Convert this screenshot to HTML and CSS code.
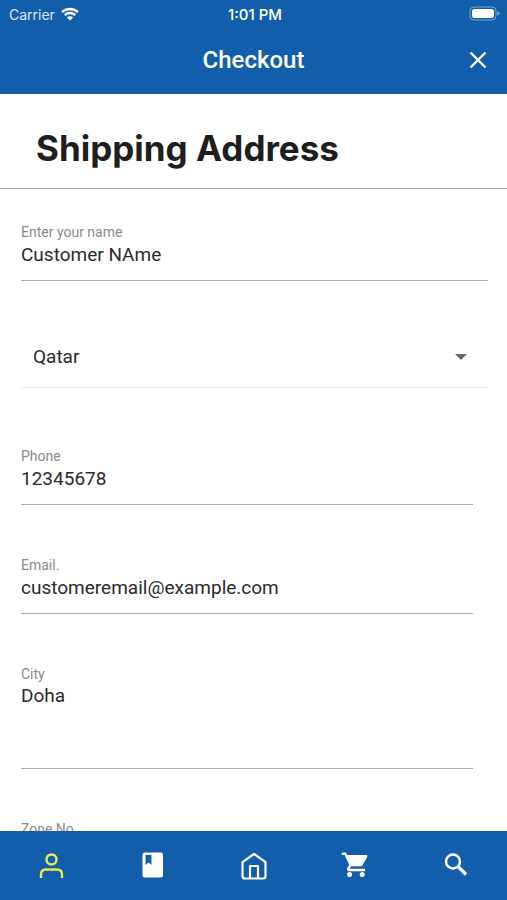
FILE: index.html
```html
<!DOCTYPE html>
<html lang="en">
<head>
<meta charset="utf-8">
<meta name="viewport" content="width=device-width, initial-scale=1">
<title>Checkout</title>
<link rel="stylesheet" href="styles.css">
</head>
<body>
<header class="top">
  <div class="status">
    <div class="carrier">Carrier
      <svg class="wifi" viewBox="0 0 18 14" aria-hidden="true"><path d="M1 5.2C5.500.9 12.500.9 17 5.200M3.700 8.100C6.700 5.300 11.300 5.300 14.300 8.100" fill="none" stroke="currentColor" stroke-width="2.300"/><path d="M9 13.500L5.900 10.400C7.600 8.900 10.400 8.900 12.100 10.400Z" fill="currentColor"/></svg>
    </div>
    <div class="time">1:01 PM</div>
    <div class="power">
      <svg class="battery" viewBox="0 0 32 16" aria-hidden="true"><rect x="1" y="1" width="26" height="13" rx="4" fill="none" stroke="#fff" stroke-opacity=".45"/><rect x="3" y="3" width="22" height="9" rx="2.500" fill="#fff"/><path d="M28.500 5.500V9.500Q30.500 8.800 30.500 7.500T28.500 5.500Z" fill="#fff" fill-opacity=".5"/></svg>
    </div>
  </div>
  <div class="appbar">
    <h1 class="title">Checkout</h1>
    <button class="close" type="button" aria-label="Close"><svg viewBox="0 0 18 18" aria-hidden="true"><path d="M1.500 1.500L16.500 16.500M16.500 1.500L1.500 16.500" stroke="currentColor" stroke-width="2.400" fill="none"/></svg></button>
  </div>
</header>
<main class="content">
  <h2 class="heading">Shipping Address</h2>
  <form class="form">
    <div class="field">
      <label for="name">Enter your name</label>
      <input id="name" type="text" value="Customer NAme">
    </div>
    <div class="country">
      <select aria-label="Country"><option>Qatar</option></select>
      <svg class="caret" viewBox="0 0 12 6" aria-hidden="true"><path d="M0 0H12L6 6Z" fill="currentColor"/></svg>
    </div>
    <div class="group">
      <div class="field">
        <label for="phone">Phone</label>
        <input id="phone" type="tel" value="12345678">
      </div>
      <div class="field">
        <label for="email">Email.</label>
        <input id="email" type="email" value="customeremail@example.com">
      </div>
      <div class="field">
        <label for="city">City</label>
        <textarea id="city" rows="3">Doha</textarea>
      </div>
      <div class="field">
        <label for="zone">Zone No</label>
        <input id="zone" type="text">
      </div>
    </div>
  </form>
</main>
<nav class="tabs">
  <a class="tab active" href="#account" aria-label="Account"><svg viewBox="0 0 28 28" aria-hidden="true"><g fill="none" stroke="currentColor" stroke-width="2.400"><circle cx="14.500" cy="7.500" r="5"/><path d="M4 26V22.500Q4 17.500 9 17.500H20Q25 17.500 25 22.500V26"/></g></svg></a>
  <a class="tab" href="#catalog" aria-label="Catalog"><svg viewBox="0 0 28 28" aria-hidden="true"><path fill="currentColor" fill-rule="evenodd" d="M7 .5H22.500Q25 .5 25 3V23Q25 25.500 22.500 25.500H7Q4.500 25.500 4.500 23V3Q4.500 .5 7 .5ZM7.500 3V13L10.500 10.500L13.500 13V3Z"/></svg></a>
  <a class="tab" href="#home" aria-label="Home"><svg viewBox="0 0 28 28" aria-hidden="true"><g fill="none" stroke="currentColor" stroke-width="2.200" stroke-linejoin="round"><path d="M14 2L25.500 10.200V24Q25.500 26.500 23 26.500H5Q2.500 26.500 2.500 24V10.200Z"/><path d="M10 26.500V14H18V26.500"/></g></svg></a>
  <a class="tab" href="#cart" aria-label="Cart"><svg viewBox="0 0 28 28" aria-hidden="true"><path fill="currentColor" d="M.8.5H5L6.200 3H25.500Q27 3.300 26.200 5L21.700 13.100Q21 14.300 19.500 14.300H10L8.700 16.800H24V19.300H8Q5.300 18.800 6.200 16.200L8.200 12.700L3.600 3H.8Z"/><circle cx="8.500" cy="22.500" r="2.500" fill="currentColor"/><circle cx="21.200" cy="22.500" r="2.500" fill="currentColor"/></svg></a>
  <a class="tab" href="#search" aria-label="Search"><svg viewBox="0 0 28 28" aria-hidden="true"><g fill="none" stroke="currentColor"><circle cx="11" cy="9.500" r="7" stroke-width="2.500"/><path d="M16 14.500L24 22.500" stroke-width="3.200"/></g></svg></a>
</nav>
</body>
</html>
```
FILE: styles.css
```css
* {
  box-sizing: border-box;
}

body {
  margin: 0;
  height: 100vh;
  display: flex;
  flex-direction: column;
  background: #fff;
  color: #2b2b2b;
  font-family: Roboto, sans-serif;
}

svg {
  display: block;
}

.top {
  flex: none;
  background: #135eab;
  color: #fff;
}

.status {
  display: grid;
  grid-template-columns: 1fr auto 1fr;
  align-items: center;
  height: 28px;
  padding: 0 6px 0 9px;
  font-family: Inter, sans-serif;
  font-size: 14px;
}

.carrier {
  display: flex;
  align-items: center;
  gap: 6px;
  color: #dce8f5;
}

.wifi {
  width: 18px;
  height: 14px;
  color: #fff;
}

.time {
  font-size: 15px;
  font-weight: 500;
}

.battery {
  width: 32px;
  height: 16px;
  margin-left: auto;
}

.appbar {
  display: grid;
  grid-template-columns: 1fr auto 1fr;
  align-items: center;
  height: 66px;
  padding: 0 12px 2px;
}

.title {
  grid-column: 2;
  margin: 0;
  font-size: 24px;
  font-weight: 500;
  line-height: 32px;
}

.close {
  justify-self: end;
  padding: 8px;
  border: 0;
  background: none;
  color: #fff;
}

.close svg {
  width: 18px;
  height: 18px;
}

.content {
  flex: 1;
  min-height: 0;
  overflow-y: auto;
  scrollbar-width: none;
}

.heading {
  margin: 0;
  padding: 34px 36px 20px;
  border-bottom: 1px solid #a8a8a8;
  color: #1e1e1e;
  font-family: Inter, sans-serif;
  font-size: 35px;
  font-weight: 700;
  line-height: 40px;
}

.form {
  padding: 35px 19px 35px 21px;
}

.field {
  display: flex;
  flex-direction: column;
}

.field label {
  color: #8a8a8a;
  font-size: 14px;
  line-height: 16px;
}

.field input,
.field textarea {
  width: 100%;
  margin: 0;
  padding: 0 0 12px;
  border: 0;
  border-bottom: 1px solid #a8a8a8;
  border-radius: 0;
  outline: 0;
  background: none;
  color: inherit;
  font: 19px/28px Roboto, sans-serif;
  resize: none;
}

.field input {
  height: 41px;
}

.field textarea {
  height: 87px;
}

.country {
  position: relative;
  margin: 45px 0 60px;
}

.country select {
  width: 100%;
  height: 62px;
  padding: 0 12px;
  border: 0;
  border-bottom: 1px solid #e6e6e6;
  border-radius: 0;
  appearance: none;
  background: none;
  color: inherit;
  font: 19px/28px Roboto, sans-serif;
}

.caret {
  position: absolute;
  top: 28px;
  right: 21px;
  width: 12px;
  height: 6px;
  color: #666;
  pointer-events: none;
}

.group {
  display: flex;
  flex-direction: column;
  gap: 52px;
  padding-right: 15px;
}

.tabs {
  flex: none;
  display: flex;
  height: 69px;
  background: #135eab;
}

.tab {
  flex: 1;
  display: flex;
  align-items: center;
  justify-content: center;
  color: #fff;
}

.tab svg {
  width: 28px;
  height: 28px;
}

.active {
  color: #e9ea4f;
}
```
